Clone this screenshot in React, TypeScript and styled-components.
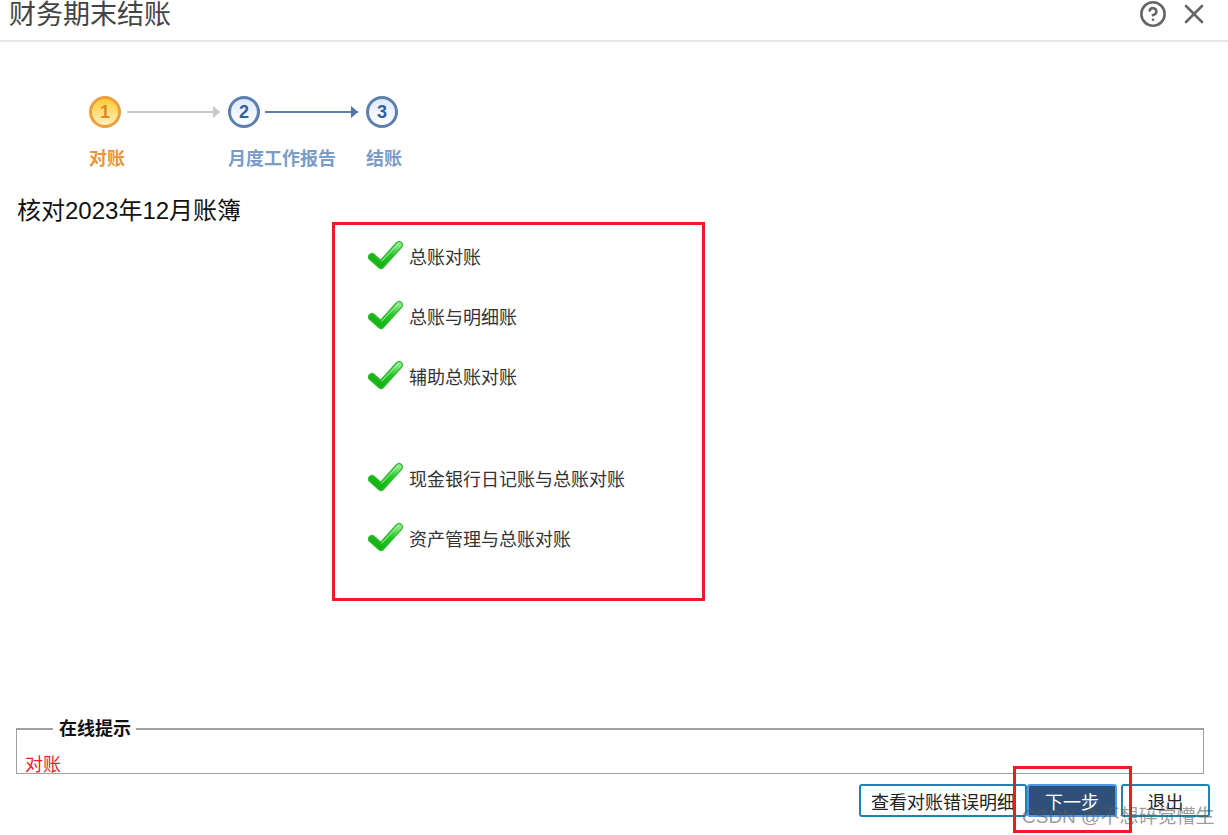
import React from "react";
import styled, { createGlobalStyle } from "styled-components";
import { CircleHelp } from "lucide-react";

const FONT = `"Liberation Sans", "Noto Sans CJK SC", sans-serif`;

const steps = [
  { no: 1, label: "对账", active: true },
  { no: 2, label: "月度工作报告", active: false },
  { no: 3, label: "结账", active: false },
];

const checks = [
  { text: "总账对账", gap: false },
  { text: "总账与明细账", gap: false },
  { text: "辅助总账对账", gap: false },
  { text: "现金银行日记账与总账对账", gap: true },
  { text: "资产管理与总账对账", gap: false },
];

const CheckIcon = () => (
  <CheckSvg viewBox="0 0 36 30" width="36" height="30">
    <defs>
      <linearGradient id="chk" x1="0" y1="1" x2="1" y2="0">
        <stop offset="0" stopColor="#0fae0f" />
        <stop offset="0.6" stopColor="#22c922" />
        <stop offset="1" stopColor="#8ae88a" />
      </linearGradient>
    </defs>
    <path d="M4 17 L13 25 L31 5" fill="none" stroke="#35b935" strokeWidth="8" strokeLinecap="round" strokeLinejoin="round" />
    <path d="M4 17 L13 25 L31 5" fill="none" stroke="url(#chk)" strokeWidth="5.5" strokeLinecap="round" strokeLinejoin="round" />
    <path d="M14 21 L30 4" fill="none" stroke="#b8f5b8" strokeWidth="1" strokeLinecap="round" />
  </CheckSvg>
);

const App = () => {
  return (
    <Page>
      <GlobalStyle />
      <Header>
        <Title>财务期末结账</Title>
        <HeaderIcons>
          <CircleHelp size={28} strokeWidth={2.2} color="#666" />
          <svg viewBox="0 0 20 20" width="20" height="20">
            <path d="M2 2 L18 18 M18 2 L2 18" stroke="#666" strokeWidth="2.6" strokeLinecap="round" />
          </svg>
        </HeaderIcons>
      </Header>

      <Steps>
        {steps.map((s, i) => (
          <Step key={s.no}>
            <StepTop>
              <Circle $active={s.active}>{s.no}</Circle>
              {i < steps.length - 1 && <Arrow $grey={i === 0} />}
            </StepTop>
            <StepLabel $active={s.active}>{s.label}</StepLabel>
          </Step>
        ))}
      </Steps>

      <Heading>核对2023年12月账簿</Heading>

      <CheckPanel>
        {checks.map((c) => (
          <CheckRow key={c.text} $gap={c.gap}>
            <CheckIcon />
            <span>{c.text}</span>
          </CheckRow>
        ))}
      </CheckPanel>

      <Hint>
        <HintTitle>在线提示</HintTitle>
        <HintText>对账</HintText>
      </Hint>

      <Buttons>
        <Button>查看对账错误明细</Button>
        <Button $primary>下一步</Button>
        <ExitButton>退出</ExitButton>
      </Buttons>

      <Marker />
      <Watermark>CSDN @不想碎觉懵生</Watermark>
    </Page>
  );
};

export default App;

const GlobalStyle = createGlobalStyle`
  html, body {
    margin: 0;
    background: #fff;
    overflow: hidden;
  }
`;

const Page = styled.div`
  position: relative;
  width: 1228px;
  height: 835px;
  overflow: hidden;
  font-family: ${FONT};
  color: #222;
`;

const Header = styled.div`
  height: 40px;
  padding: 0 24px 0 9px;
  display: flex;
  justify-content: space-between;
  align-items: flex-start;
  border-bottom: 2px solid #e6e6e6;
`;

const Title = styled.div`
  font-size: 27px;
  line-height: 29px;
  margin-top: 1px;
  color: #444;
`;

const HeaderIcons = styled.div`
  display: flex;
  align-items: center;
  gap: 17px;
  height: 28px;
`;

const Steps = styled.div`
  display: flex;
  margin: 54px 0 0 89px;
`;

const Step = styled.div`
  display: flex;
  flex-direction: column;
`;

const StepTop = styled.div`
  display: flex;
  align-items: center;
`;

const Circle = styled.div<{ $active: boolean }>`
  width: 32px;
  height: 32px;
  box-sizing: border-box;
  border-radius: 50%;
  display: flex;
  align-items: center;
  justify-content: center;
  font-size: 18px;
  font-weight: bold;
  border: 3px solid ${(p) => (p.$active ? "#ee9f3c" : "#5d7fae")};
  color: ${(p) => (p.$active ? "#d98a2a" : "#2f5f9e")};
  background: ${(p) =>
    p.$active
      ? "linear-gradient(#ffcc33, #fff0c0)"
      : "linear-gradient(#dfeafa, #ffffff)"};
`;

const Arrow = styled.div<{ $grey: boolean }>`
  position: relative;
  width: 93px;
  height: 2px;
  margin: 0 8px 0 ${(p) => (p.$grey ? "6px" : "5px")};
  background: ${(p) => (p.$grey ? "#c8c8c8" : "#5f7fab")};

  &::after {
    content: "";
    position: absolute;
    right: 0;
    top: -5px;
    border-left: 7px solid ${(p) => (p.$grey ? "#c8c8c8" : "#4f73a6")};
    border-top: 6px solid transparent;
    border-bottom: 6px solid transparent;
  }
`;

const StepLabel = styled.div<{ $active: boolean }>`
  margin-top: 19px;
  height: 24px;
  line-height: 24px;
  font-size: 18px;
  font-weight: bold;
  white-space: nowrap;
  width: 0;
  color: ${(p) => (p.$active ? "#e8963a" : "#7b9cc6")};
`;

const Heading = styled.div`
  margin: 25px 0 0 17px;
  font-size: 24px;
  line-height: 30px;
  height: 30px;
  color: #111;
`;

const CheckPanel = styled.div`
  box-sizing: border-box;
  width: 373px;
  height: 379px;
  margin: -4px 0 0 332px;
  padding: 13px 0 0 33px;
  border: 3px solid #ed1c24;
`;

const CheckRow = styled.div<{ $gap: boolean }>`
  display: flex;
  align-items: center;
  gap: 5px;
  height: 36px;
  margin-top: ${(p) => (p.$gap ? "66px" : "0")};
  margin-bottom: 24px;
  font-size: 18px;
  color: #333;
  white-space: nowrap;
`;

const CheckSvg = styled.svg`
  flex: none;
  margin-top: -2px;
`;

const Hint = styled.fieldset`
  box-sizing: border-box;
  width: 1188px;
  height: 55px;
  margin: 118px 0 0 16px;
  padding: 0 8px;
  border: 1px solid #a0a0a0;
  border-top-width: 2px;
`;

const HintTitle = styled.legend`
  margin-left: 28px;
  padding: 0 5px 0 6px;
  font-size: 18px;
  font-weight: bold;
  line-height: 20px;
  color: #111;
`;

const HintText = styled.div`
  margin-top: 14px;
  font-size: 18px;
  line-height: 24px;
  color: #f01c24;
`;

const Buttons = styled.div`
  display: flex;
  justify-content: flex-end;
  margin: 10px 18px 0 0;
`;

const Button = styled.button<{ $primary?: boolean }>`
  box-sizing: border-box;
  height: 33px;
  padding: 0;
  width: ${(p) => (p.$primary ? "90px" : "168px")};
  border-radius: 3px;
  font-family: ${FONT};
  font-size: 18px;
  white-space: nowrap;
  border: 2px solid ${(p) => (p.$primary ? "#4a9ae8" : "#1c84b0")};
  background: ${(p) => (p.$primary ? "#2f5078" : "#fff")};
  color: ${(p) => (p.$primary ? "#fff" : "#222")};
`;

const ExitButton = styled(Button)`
  width: 89px;
  margin-left: 4px;
`;

const Marker = styled.div`
  position: absolute;
  left: 1013px;
  top: 766px;
  width: 119px;
  height: 67px;
  box-sizing: border-box;
  border: 3px solid #ed1c24;
`;

const Watermark = styled.div`
  position: absolute;
  left: 1022px;
  top: 805px;
  font-size: 19px;
  line-height: 24px;
  color: rgba(90, 90, 90, 0.62);
  white-space: nowrap;
`;
